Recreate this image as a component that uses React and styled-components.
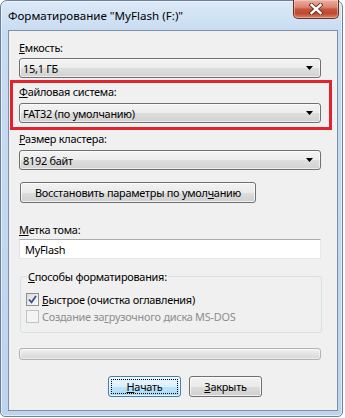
import React from "react";
import styled, { createGlobalStyle, css } from "styled-components";

const GlobalStyle = createGlobalStyle`
  html, body {
    margin: 0;
    padding: 0;
    background: #ffffff;
  }
  body {
    font-family: "Noto Sans", "Open Sans", sans-serif;
    font-size: 10.9px;
    letter-spacing: -0.25px;
    color: #000;
  }
`;

const Window = styled.div`
  width: 343px;
  height: 417px;
  box-sizing: border-box;
  border: 1px solid #6a819e;
  border-radius: 7px 7px 5px 5px;
  background: linear-gradient(#dce9f7 0px, #c8dcf2 30px, #bcd4ee 100%);
  box-shadow: inset 0 0 0 1px rgba(255, 255, 255, 0.55);
  display: flex;
  flex-direction: column;
`;

const TitleBar = styled.div`
  height: 29px;
  display: flex;
  justify-content: space-between;
  align-items: flex-start;
  padding: 0 3px 0 7px;
`;

const Title = styled.span`
  line-height: 29px;
  font-size: 11.6px;
  letter-spacing: 0;
  padding-bottom: 1px;
`;

const CloseButton = styled.div`
  width: 46px;
  height: 19px;
  margin-top: -1px;
  box-sizing: border-box;
  border: 1px solid #6b2e24;
  border-top: none;
  border-radius: 0 0 5px 5px;
  background: linear-gradient(#eab0a2 0%, #dc8470 40%, #c7533b 52%, #c04a30 75%, #d98466 100%);
  box-shadow: inset 0 0 0 1px rgba(255, 220, 210, 0.45);
  display: flex;
  align-items: center;
  justify-content: center;
`;

const Client = styled.div`
  flex: 1;
  margin: 0 4px 5px 7px;
  border: 1px solid #7f8fa5;
  background: #f0f0f0;
  padding: 9px 0 0 10px;
  display: flex;
  flex-direction: column;
  align-items: flex-start;
`;

const Label = styled.div`
  line-height: 15px;
  margin-top: ${p => p.$mt || 0}px;
`;

const Highlight = styled.div`
  margin: ${p => p.$mt || 0}px 0 0 -9px;
  width: 322px;
  box-sizing: border-box;
  border: 3px solid #e0232d;
  padding: 1px 0 4px 6px;
  display: flex;
  flex-direction: column;
  align-items: flex-start;
`;

const Combo = styled.div`
  width: 302px;
  height: 20px;
  box-sizing: border-box;
  margin-top: ${p => p.$mt || 0}px;
  border: 1px solid #707070;
  border-radius: 3px;
  background: linear-gradient(#f3f3f3 0%, #ececec 50%, #dedede 51%, #d2d2d2 100%);
  box-shadow: inset 0 0 0 1px rgba(255, 255, 255, 0.6);
  padding: 0 7px 0 3px;
  display: flex;
  align-items: center;
  justify-content: space-between;
`;

const Button = styled.button`
  height: 21px;
  width: ${p => p.$w}px;
  margin: ${p => p.$m || "0"};
  box-sizing: border-box;
  padding: 0;
  white-space: nowrap;
  border: 1px solid #707070;
  border-radius: 3px;
  background: linear-gradient(#f2f2f2 0%, #ebebeb 50%, #dddddd 51%, #cfcfcf 100%);
  box-shadow: inset 0 0 0 1px rgba(255, 255, 255, 0.7);
  font-family: "Noto Sans", "Open Sans", sans-serif;
  font-size: 10.9px;
  letter-spacing: -0.25px;
  color: #000;
  ${p =>
    p.$default &&
    css`
      border-color: #3c7fb1;
      background: linear-gradient(#eaf6fd 0%, #d9f0fc 50%, #bee6fd 51%, #a7d9f5 100%);
      outline: 1px dotted #000;
      outline-offset: -4px;
    `}
`;

const TextInput = styled.div`
  width: 302px;
  height: 20px;
  box-sizing: border-box;
  margin-top: ${p => p.$mt || 0}px;
  border: 1px solid #e3e9ef;
  border-top-color: #abadb3;
  border-left-color: #e2e3ea;
  background: #fff;
  padding-left: 5px;
  display: flex;
  align-items: center;
`;

const Group = styled.fieldset`
  margin: 10px 0 0 1px;
  width: 302px;
  box-sizing: border-box;
  border: 1px solid #d5dfe5;
  border-radius: 3px;
  padding: 7px 0 8px 5px;
  display: flex;
  flex-direction: column;
  gap: 1px;
`;

const Legend = styled.legend`
  padding: 0 1px;
  margin-left: 1px;
  line-height: 15px;
`;

const CheckRow = styled.div`
  display: flex;
  align-items: center;
  gap: 3px;
  height: 16px;
  color: ${p => (p.$disabled ? "#8d8d8d" : "#000")};
`;

const CheckBox = styled.span`
  width: 13px;
  height: 13px;
  box-sizing: border-box;
  border: 1px solid ${p => (p.$disabled ? "#c4c4c4" : "#8e8f8f")};
  background: ${p =>
    p.$disabled ? "#f4f4f4" : "linear-gradient(135deg, #dcdcdc 0%, #fafafa 100%)"};
  display: flex;
  align-items: center;
  justify-content: center;
`;

const Progress = styled.div`
  width: 302px;
  height: 12px;
  box-sizing: border-box;
  margin-top: 15px;
  border: 1px solid #b2b2b2;
  border-radius: 3px;
  background: linear-gradient(#f3f3f3 0%, #e2e2e2 50%, #d8d8d8 100%);
  box-shadow: inset 0 0 0 1px rgba(255, 255, 255, 0.5);
`;

const Footer = styled.div`
  display: flex;
  gap: 8px;
  margin: 16px 0 0 89px;
`;

const Arrow = () => (
  <svg width="7" height="4" viewBox="0 0 7 4">
    <path d="M0 0h7L3.5 4z" fill="#000" />
  </svg>
);

const CloseGlyph = () => (
  <svg width="14" height="12" viewBox="0 0 14 12">
    <path d="M2.5 2l9 8M11.5 2l-9 8" stroke="#5b2a22" strokeWidth="4.2" strokeLinecap="square" />
    <path d="M2.5 2l9 8M11.5 2l-9 8" stroke="#fff" strokeWidth="2.4" strokeLinecap="square" />
  </svg>
);

const Check = () => (
  <svg width="9" height="9" viewBox="0 0 9 9">
    <path d="M1 4.5l2.5 2.8L8 1" fill="none" stroke="#3d4f8f" strokeWidth="1.8" />
  </svg>
);

export default function App() {
  return (
    <>
      <GlobalStyle />
      <Window>
        <TitleBar>
          <Title>Форматирование "MyFlash (F:)"</Title>
          <CloseButton>
            <CloseGlyph />
          </CloseButton>
        </TitleBar>
        <Client>
          <Label>
            <u>Е</u>мкость:
          </Label>
          <Combo $mt={3}>
            <span>15,1 ГБ</span>
            <Arrow />
          </Combo>

          <Highlight $mt={2}>
            <Label>
              <u>Ф</u>айловая система:
            </Label>
            <Combo $mt={4}>
              <span>FAT32 (по умолчанию)</span>
              <Arrow />
            </Combo>
          </Highlight>

          <Label $mt={1}>
            <u>Р</u>азмер кластера:
          </Label>
          <Combo $mt={4}>
            <span>8192 байт</span>
            <Arrow />
          </Combo>

          <Button $w={236} $m="12px 0 0 1px">
            Восстановить параметры по умол<u>ч</u>анию
          </Button>

          <Label $mt={19}>
            <u>М</u>етка тома:
          </Label>
          <TextInput $mt={2}>MyFlash</TextInput>

          <Group>
            <Legend>
              <u>С</u>пособы форматирования:
            </Legend>
            <CheckRow>
              <CheckBox>
                <Check />
              </CheckBox>
              <span>
                <u>Б</u>ыстрое (очистка оглавления)
              </span>
            </CheckRow>
            <CheckRow $disabled>
              <CheckBox $disabled />
              <span>
                Создание за<u>г</u>рузочного диска MS-DOS
              </span>
            </CheckRow>
          </Group>

          <Progress />

          <Footer>
            <Button $w={73} $default>
              <u>Н</u>ачать
            </Button>
            <Button $w={73}>
              <u>З</u>акрыть
            </Button>
          </Footer>
        </Client>
      </Window>
    </>
  );
}
